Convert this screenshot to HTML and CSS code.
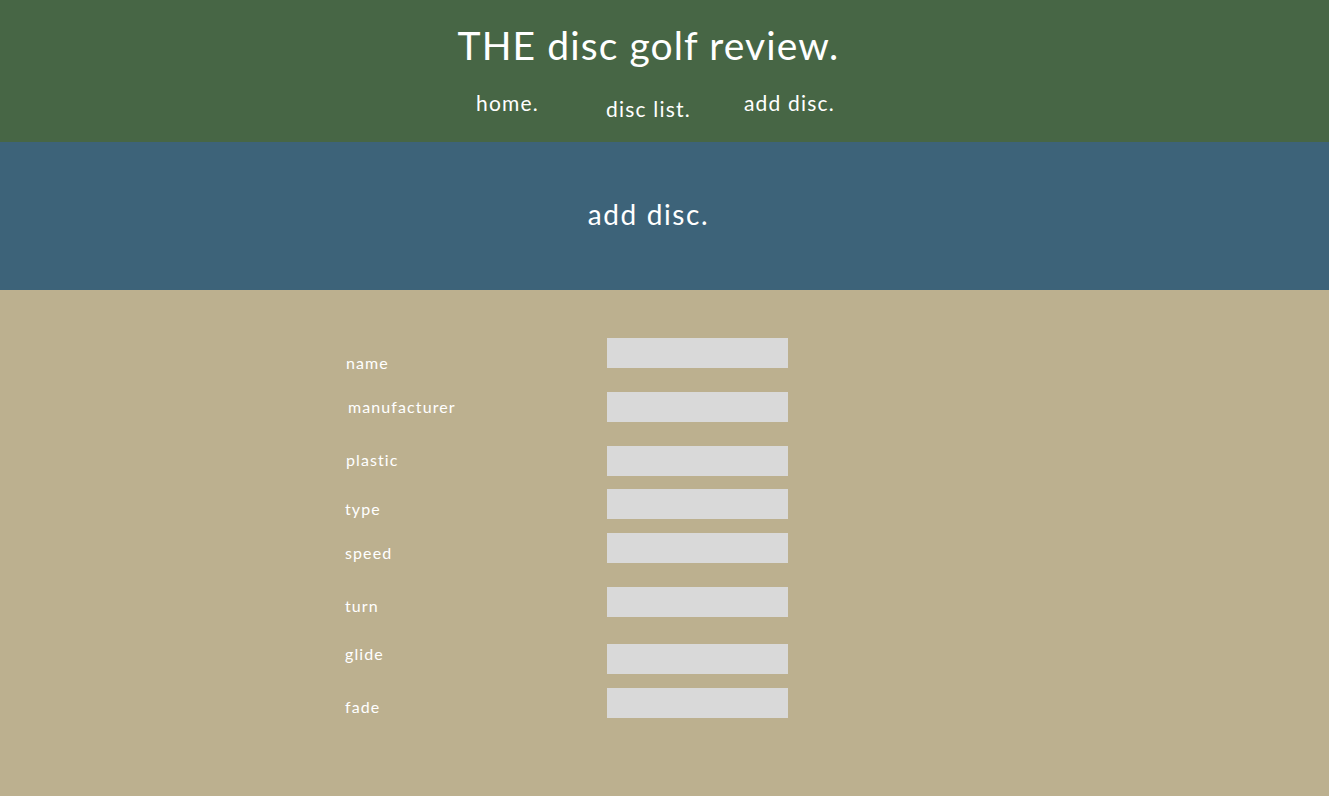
FILE: index.html
```html
<!DOCTYPE html>
<html lang="en">
<head>
<meta charset="utf-8">
<title>THE disc golf review.</title>
<link rel="stylesheet" href="styles.css">
</head>
<body>
<header class="site-header">
  <h1 class="site-title">THE disc golf review.</h1>
  <nav class="nav">
    <a class="nav-link" href="#">home.</a>
    <a class="nav-link nav-link--low" href="#">disc list.</a>
    <a class="nav-link" href="#">add disc.</a>
  </nav>
</header>
<section class="banner">
  <h2 class="banner-title">add disc.</h2>
</section>
<main class="content">
  <form class="disc-form">
    <div class="row row--name"><label class="label">name</label><input class="field" type="text"></div>
    <div class="row row--manu"><label class="label">manufacturer</label><input class="field" type="text"></div>
    <div class="row row--plastic"><label class="label">plastic</label><input class="field" type="text"></div>
    <div class="row row--type"><label class="label">type</label><input class="field" type="text"></div>
    <div class="row row--speed"><label class="label">speed</label><input class="field" type="text"></div>
    <div class="row row--turn"><label class="label">turn</label><input class="field" type="text"></div>
    <div class="row row--glide"><label class="label">glide</label><input class="field" type="text"></div>
    <div class="row row--fade"><label class="label">fade</label><input class="field" type="text"></div>
  </form>
</main>
</body>
</html>
```

FILE: styles.css
```css
* { box-sizing: border-box; }
html, body { margin: 0; padding: 0; }
body {
  font-family: "Lato", "Open Sans", sans-serif;
  color: #fff;
  background: #bcb08f;
  min-height: 796px;
}
.site-header {
  background: #476645;
  height: 142px;
  display: flex;
  flex-direction: column;
  align-items: center;
  padding: 22px 32px 0 0;
}
.site-title {
  margin: 0;
  font-weight: 400;
  font-size: 39px;
  line-height: 46px;
  letter-spacing: 1.1px;
}
.nav {
  display: flex;
  margin-top: 22px;
}
.nav-link {
  color: #fff;
  text-decoration: none;
  font-size: 21px;
  line-height: 26px;
  letter-spacing: 1.2px;
  width: 141px;
  text-align: center;
}
.nav-link--low { margin-top: 6px; }
.banner {
  background: #3d6379;
  height: 148px;
  display: flex;
  align-items: center;
  justify-content: center;
  padding-right: 32px;
}
.banner-title {
  margin: 0 0 4px 0;
  font-weight: 400;
  font-size: 28px;
  letter-spacing: 1.6px;
}
.content {
  padding: 48px 0 60px 345px;
}
.disc-form {
  display: flex;
  flex-direction: column;
}
.row {
  display: flex;
  align-items: flex-start;
  height: 30px;
}
.label {
  width: 262px;
  font-size: 16px;
  line-height: 20px;
  letter-spacing: 1.1px;
}
.field {
  width: 181px;
  height: 30px;
  border: 0;
  background: #d9d9d9;
  margin: 0;
  padding: 0;
}
.row--name .label { padding-top: 15px; padding-left: 1px; }
.row--manu { margin-top: 24px; }
.row--manu .label { padding-top: 5px; padding-left: 3px; }
.row--plastic { margin-top: 24px; }
.row--plastic .label { padding-top: 4px; padding-left: 1px; }
.row--type { margin-top: 13px; }
.row--type .label { padding-top: 10px; }
.row--speed { margin-top: 14px; }
.row--speed .label { padding-top: 10px; }
.row--turn { margin-top: 24px; }
.row--turn .label { padding-top: 9px; }
.row--glide { margin-top: 27px; }
.row--glide .label { padding-top: 0; }
.row--fade { margin-top: 14px; }
.row--fade .label { padding-top: 9px; }
```
